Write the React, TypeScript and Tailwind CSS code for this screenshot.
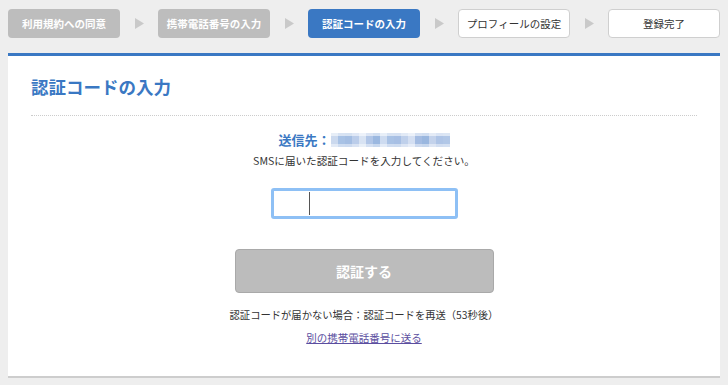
import React from "react";

const font = { fontFamily: '"Noto Sans CJK JP", "Noto Sans", sans-serif' };

function Arrow() {
  return (
    <div className="flex w-[38px] items-center justify-center">
      <svg width="9" height="11" viewBox="0 0 9 11">
        <polygon points="0,0 9,5.5 0,11" fill="#c9c9c9" />
      </svg>
    </div>
  );
}

function Blur() {
  const cells = [
    "#c5d5ec", "#9fbbe2", "#9ab7e0", "#b4c8e8", "#d4e0f2", "#a8c0e4", "#90b0dd", "#c8d7ee",
    "#a0bbe2", "#9db8e1", "#b8cbe9", "#cfdcf1", "#9ab5df", "#8fafdc", "#bccde9", "#a5bee3", "#a9c1e4",
  ];
  return (
    <svg width="119" height="14" viewBox="0 0 119 14">
      {cells.map((c, i) => (
        <rect key={i} x={i * 7} y={0} width={7} height={14} fill={c} opacity={0.9} />
      ))}
      <rect x="0" y="0" width="119" height="3" fill="#ffffff" opacity="0.55" />
      <rect x="0" y="11" width="119" height="3" fill="#ffffff" opacity="0.45" />
    </svg>
  );
}

export default function App() {
  const steps = [
    { label: "利用規約への同意", kind: "done" },
    { label: "携帯電話番号の入力", kind: "done" },
    { label: "認証コードの入力", kind: "active" },
    { label: "プロフィールの設定", kind: "todo" },
    { label: "登録完了", kind: "todo" },
  ];
  return (
    <div className="min-h-[385px] w-[728px] bg-[#eeeeee] pl-[8px] pt-[9px]" style={font}>
      <div className="flex h-[29px]">
        {steps.map((s, i) => (
          <React.Fragment key={s.label}>
            {i > 0 && <Arrow />}
            <div
              className={
                "flex h-[29px] w-[112px] items-center justify-center rounded-[4px] text-[10.5px] " +
                (s.kind === "done"
                  ? "bg-[#bdbdbd] font-bold text-white"
                  : s.kind === "active"
                  ? "bg-[#3a78c3] font-bold text-white"
                  : "border border-[#cfcfcf] bg-white text-[#333333]")
              }
            >
              {s.label}
            </div>
          </React.Fragment>
        ))}
      </div>

      <div className="mt-[15px] w-[712px] border-t-[3px] border-b-[2px] border-t-[#3a78c3] border-b-[#cdcdcd] bg-white px-[23px] pb-[30px]">
        <div className="border-b border-dotted border-[#cccccc] pt-[19px] pb-[16px]">
          <h1 className="h-[24px] text-[17.5px] leading-[24px] font-bold text-[#3a78c3]">認証コードの入力</h1>
        </div>
        <div className="flex flex-col items-center">
          <div className="mt-[14px] flex h-[20px] items-center">
            <span className="text-[13px] font-bold text-[#3a78c3]">送信先：</span>
            <Blur />
          </div>
          <p className="mt-[3px] text-[10.6px] leading-[16px] text-[#333333]">
            SMSに届いた認証コードを入力してください。
          </p>
          <div className="relative mt-[19px] h-[31px] w-[187px] rounded-[3px] border-[3px] border-[#8ec0f5] bg-white">
            <div className="absolute top-[1px] bottom-[1px] left-[35px] w-px bg-[#555555]" />
          </div>
          <div className="mt-[30px] flex h-[44px] w-[259px] items-center justify-center rounded-[4px] border border-[#a9a9a9] bg-[#bcbcbc] text-[14px] font-bold text-white">
            認証する
          </div>
          <p className="mt-[14px] text-[10.3px] leading-[16px] text-[#333333]">
            認証コードが届かない場合：認証コードを再送（53秒後）
          </p>
          <a href="#" className="mt-[7px] text-[10.5px] leading-[16px] text-[#5b4ea0] underline">
            別の携帯電話番号に送る
          </a>
        </div>
      </div>
    </div>
  );
}
